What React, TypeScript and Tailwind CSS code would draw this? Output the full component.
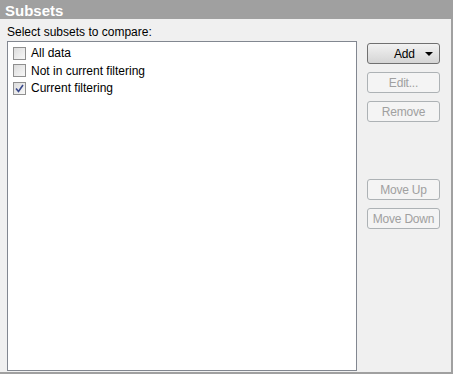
import React from "react";

const font = { fontFamily: '"Liberation Sans", Arial, sans-serif' };

function Check({ checked }: { checked?: boolean }) {
  return (
    <div className="w-[13px] h-[13px] border border-[#8f8f8f] bg-gradient-to-br from-[#dcdcdc] to-[#f8f8f8] flex items-center justify-center">
      {checked && (
        <svg width="9" height="9" viewBox="0 0 9 9">
          <path d="M1 4.5 L3.5 7.5 L8 1" stroke="#3a4a8c" strokeWidth="1.6" fill="none" />
        </svg>
      )}
    </div>
  );
}

function Btn({ label, disabled, dropdown }: { label: string; disabled?: boolean; dropdown?: boolean }) {
  return (
    <div
      className={
        "w-[73px] h-[21px] rounded-[3px] border flex items-center justify-center text-[12px] tracking-[-0.2px] " +
        (disabled
          ? "border-[#adb2b5] bg-[#f4f4f4] text-[#a0a0a0]"
          : "border-[#707070] bg-gradient-to-b from-[#f2f2f2] to-[#d5d5d5] text-black")
      }
    >
      {dropdown ? (
        <div className="flex items-center w-full pl-[26px] pr-[6px] justify-between">
          <span>{label}</span>
          <svg width="8" height="4" viewBox="0 0 8 4">
            <path d="M0 0 H8 L4 4 Z" fill="#000" />
          </svg>
        </div>
      ) : (
        <span>{label}</span>
      )}
    </div>
  );
}

export default function App() {
  return (
    <div className="w-[453px] h-[374px] bg-[#f0f0f0] flex flex-col border-r-2 border-b-2 border-[#a0a0a0]" style={font}>
      <div className="shrink-0 h-[19px] bg-[#a0a0a0] pt-[2px] pl-[5px] text-white font-bold text-[15px] leading-[17px]">
        Subsets
      </div>
      <div className="shrink-0 h-[22px] pl-[7px] pt-[6px] text-[12px] leading-[14px] text-black">Select subsets to compare:</div>
      <div className="shrink-0 flex">
        <div className="ml-[7px] w-[350px] h-[330px] border border-[#828790] bg-white pt-[4px] pl-[5px] flex flex-col gap-[3.5px]">
          {[
            { l: "All data" },
            { l: "Not in current filtering" },
            { l: "Current filtering", c: true },
          ].map((r) => (
            <div key={r.l} className="flex items-center gap-[5px] h-[14px] text-[12px] text-black">
              <Check checked={r.c} />
              <span>{r.l}</span>
            </div>
          ))}
        </div>
        <div className="ml-[10px] pt-[2px] flex flex-col">
          <Btn label="Add" dropdown />
          <div className="h-[8px]" />
          <Btn label="Edit..." disabled />
          <div className="h-[8px]" />
          <Btn label="Remove" disabled />
          <div className="h-[57px]" />
          <Btn label="Move Up" disabled />
          <div className="h-[8px]" />
          <Btn label="Move Down" disabled />
        </div>
      </div>
    </div>
  );
}
